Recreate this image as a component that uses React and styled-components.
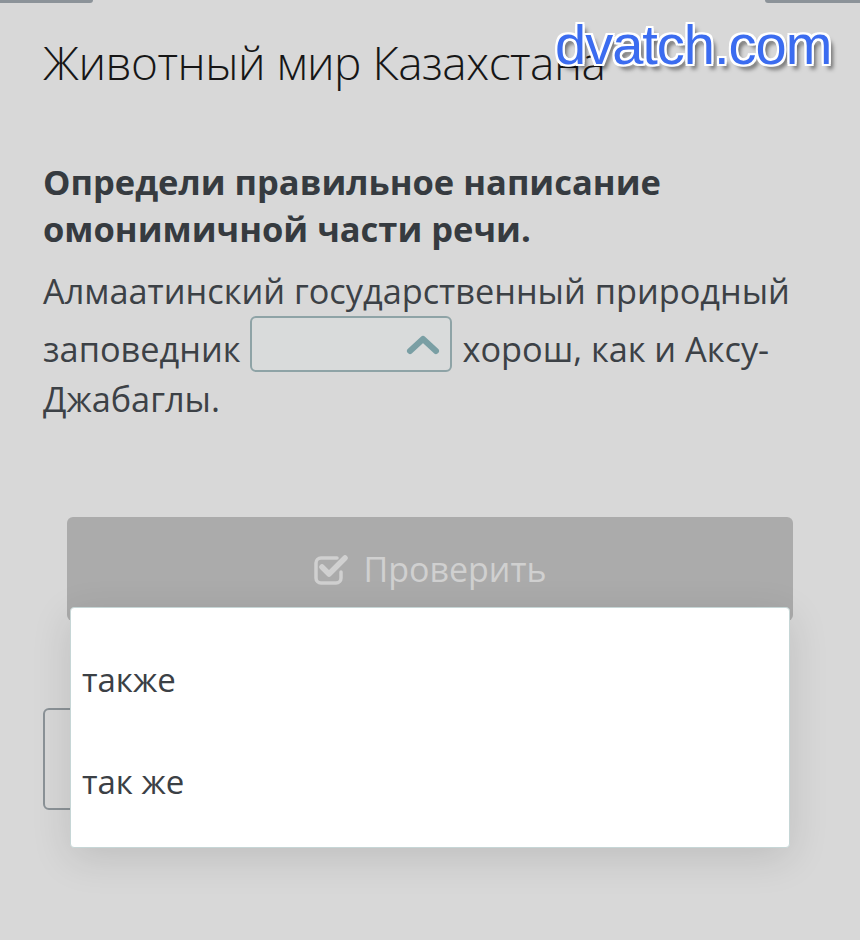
import React from "react";
import styled, { createGlobalStyle } from "styled-components";

const GlobalStyle = createGlobalStyle`
  body {
    margin: 0;
    background: #d8d8d8;
    font-family: "Open Sans", "Noto Sans", sans-serif;
  }
`;

const Page = styled.div`
  position: relative;
  width: 860px;
  height: 940px;
  overflow: hidden;
  background: #d8d8d8;
`;

const TopBar = styled.div`
  display: flex;
  justify-content: space-between;
  height: 3px;
`;

const Tab = styled.div`
  width: ${(p) => p.$w}px;
  height: 3px;
  background: #8c9399;
  border-radius: ${(p) => (p.$side === "left" ? "0 0 4px 0" : "0 0 0 4px")};
`;

const Watermark = styled.div`
  position: absolute;
  left: 555px;
  top: 12px;
  font-family: "Liberation Sans", Arial, sans-serif;
  font-size: 56px;
  letter-spacing: -1px;
  color: #3b6cf0;
  text-shadow: -2px 0 #fff, 2px 0 #fff, 0 -2px #fff, 0 2px #fff,
    -2px -2px #fff, 2px 2px #fff, -2px 2px #fff, 2px -2px #fff,
    4px 5px 4px rgba(0, 0, 0, 0.55);
`;

const Content = styled.div`
  padding: 0 43px;
`;

const Title = styled.h1`
  margin: 29px 0 0;
  font-weight: 300;
  font-size: 46px;
  line-height: 60px;
  letter-spacing: -0.5px;
  color: #161616;
`;

const Question = styled.h2`
  margin: 66px 0 0;
  font-weight: 700;
  font-size: 34.5px;
  line-height: 47px;
  color: #363b40;
`;

const Sentence = styled.p`
  margin: 14px 0 0;
  font-size: 34.3px;
  line-height: 50px;
  color: #3c4146;
`;

const Select = styled.span`
  display: inline-flex;
  align-items: center;
  justify-content: flex-end;
  box-sizing: border-box;
  width: 202px;
  height: 56px;
  margin: 0 10px;
  padding-right: 10px;
  vertical-align: text-bottom;
  border: 2px solid #8ea3a6;
  border-radius: 6px;
  background: #d9dbdb;
`;

const CheckButton = styled.div`
  display: flex;
  align-items: center;
  justify-content: center;
  gap: 14px;
  height: 104px;
  margin: 93px 67px 0;
  border-radius: 6px;
  background: #ababab;
  color: #d0d0d0;
  font-size: 34px;
`;

const NavButton = styled.div`
  box-sizing: border-box;
  width: 200px;
  height: 102px;
  margin-top: 87px;
  border: 2px solid #8b9297;
  border-radius: 6px;
`;

const Menu = styled.div`
  position: absolute;
  left: 70px;
  top: 607px;
  box-sizing: border-box;
  width: 720px;
  height: 241px;
  padding: 20px 0 17px;
  background: #fff;
  border: 1px solid #c6d6d6;
  border-radius: 4px;
  box-shadow: 0 10px 40px rgba(0, 0, 0, 0.12);
`;

const Option = styled.div`
  display: flex;
  align-items: center;
  height: 102px;
  padding-left: 11px;
  font-size: 33px;
  color: #3b4045;
`;

function ChevronUp() {
  return (
    <svg width="34" height="22" viewBox="0 0 34 22">
      <polyline
        points="4,18 17,6 30,18"
        fill="none"
        stroke="#7a9fa4"
        strokeWidth="6"
        strokeLinecap="round"
        strokeLinejoin="round"
      />
    </svg>
  );
}

function CheckIcon() {
  return (
    <svg width="36" height="32" viewBox="0 0 36 32">
      <path
        d="M24 5H8a5 5 0 0 0-5 5v15a5 5 0 0 0 5 5h15a5 5 0 0 0 5-5v-6"
        fill="none"
        stroke="#d0d0d0"
        strokeWidth="3.5"
        strokeLinecap="round"
      />
      <polyline
        points="9,14 16,21 32,5"
        fill="none"
        stroke="#d0d0d0"
        strokeWidth="5.5"
        strokeLinecap="round"
        strokeLinejoin="round"
      />
    </svg>
  );
}

export default function App() {
  return (
    <Page>
      <GlobalStyle />
      <TopBar>
        <Tab $w={93} $side="left" />
        <Tab $w={95} $side="right" />
      </TopBar>
      <Content>
        <Title>Животный мир Казахстана</Title>
        <Question>
          Определи правильное написание
          <br />
          омонимичной части речи.
        </Question>
        <Sentence>
          Алмаатинский государственный природный заповедник
          <Select>
            <ChevronUp />
          </Select>
          хорош, как и Аксу-Джабаглы.
        </Sentence>
      </Content>
      <CheckButton>
        <CheckIcon />
        Проверить
      </CheckButton>
      <Content>
        <NavButton />
      </Content>
      <Watermark>dvatch.com</Watermark>
      <Menu>
        <Option>также</Option>
        <Option>так же</Option>
      </Menu>
    </Page>
  );
}
